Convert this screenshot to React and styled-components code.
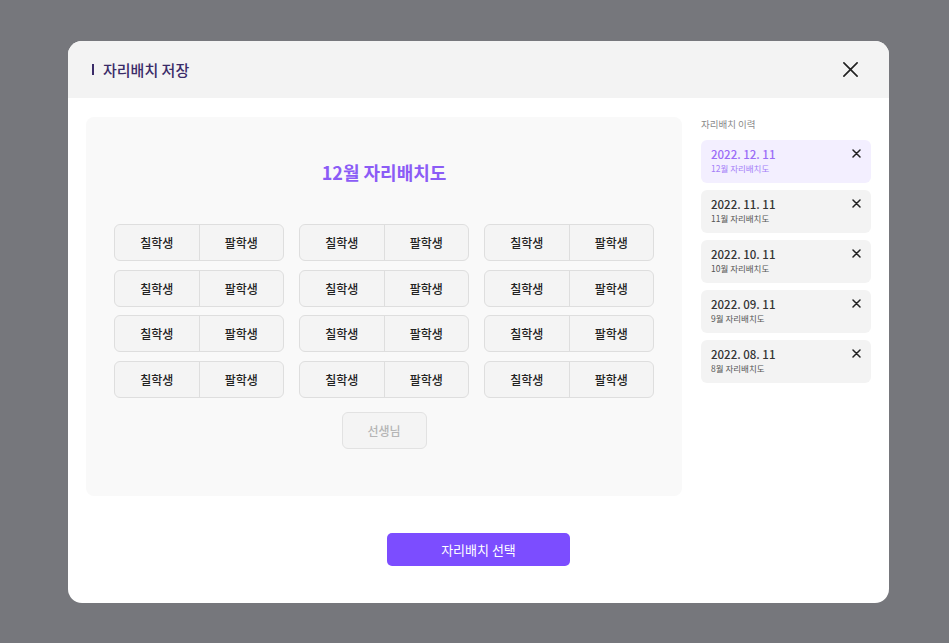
import React from "react";
import styled, { createGlobalStyle } from "styled-components";

const GlobalStyle = createGlobalStyle`
  html, body {
    margin: 0;
    padding: 0;
    background: #76777c;
    font-family: "Noto Sans CJK KR", "Noto Sans", sans-serif;
  }
`;

const Overlay = styled.div`
  width: 949px;
  height: 643px;
  box-sizing: border-box;
  padding: 41px 0 0 68px;
  display: flex;
  align-items: flex-start;
`;

const Modal = styled.div`
  width: 821px;
  height: 562px;
  background: #ffffff;
  border-radius: 14px;
  overflow: hidden;
  display: flex;
  flex-direction: column;
`;

const Header = styled.div`
  height: 57px;
  background: #f3f3f3;
  display: flex;
  align-items: center;
  justify-content: space-between;
  padding: 0 29px 0 24px;
  flex-shrink: 0;
`;

const HeaderTitle = styled.h2`
  margin: 0;
  font-size: 15px;
  font-weight: 500;
  color: #3a2b68;
  display: flex;
  align-items: center;
  gap: 9px;
`;

const Bar = styled.span`
  width: 2px;
  height: 11px;
  background: #3a2b68;
`;

const CloseButton = styled.button`
  border: none;
  background: none;
  padding: 0;
  width: 20px;
  height: 20px;
  display: flex;
  align-items: center;
  justify-content: center;
  cursor: pointer;
`;

const Body = styled.div`
  display: flex;
  gap: 19px;
  padding: 19px 18px 0 18px;
`;

const Board = styled.div`
  width: 596px;
  height: 379px;
  background: #f9f9f9;
  border-radius: 8px;
  box-sizing: border-box;
  padding-top: 43px;
  display: flex;
  flex-direction: column;
  align-items: center;
`;

const BoardTitle = styled.h3`
  margin: 0;
  font-size: 18px;
  line-height: 24px;
  font-weight: 700;
  color: #8b5cf6;
`;

const SeatGrid = styled.div`
  margin-top: 40px;
  display: grid;
  grid-template-columns: repeat(3, 170px);
  grid-auto-rows: 37px;
  column-gap: 15px;
  row-gap: 8.5px;
`;

const Desk = styled.div`
  display: flex;
  box-sizing: border-box;
  border: 1px solid #dedede;
  border-radius: 6px;
  background: #f4f4f4;
  overflow: hidden;
`;

const Seat = styled.div`
  flex: 1;
  display: flex;
  align-items: center;
  justify-content: center;
  font-size: 12px;
  font-weight: 500;
  color: #222;
  & + & {
    border-left: 1px solid #dedede;
  }
`;

const Teacher = styled.div`
  margin-top: 14px;
  width: 85px;
  height: 37px;
  box-sizing: border-box;
  border: 1px solid #e2e2e2;
  border-radius: 6px;
  background: #f4f4f4;
  display: flex;
  align-items: center;
  justify-content: center;
  font-size: 12px;
  font-weight: 500;
  color: #b5b5b5;
`;

const History = styled.div`
  width: 170px;
  display: flex;
  flex-direction: column;
`;

const HistoryLabel = styled.div`
  font-size: 9.5px;
  line-height: 14px;
  color: #8a8a8a;
  margin-bottom: 9px;
`;

const HistoryList = styled.div`
  display: flex;
  flex-direction: column;
  gap: 7px;
`;

const HistoryCard = styled.div`
  position: relative;
  height: 43px;
  box-sizing: border-box;
  padding: 6px 10px 0 10px;
  border-radius: 6px;
  background: ${(p) => (p.$active ? "#f3efff" : "#f3f3f3")};
  color: ${(p) => (p.$active ? "#9b6cf7" : "#333")};
`;

const HistoryDate = styled.div`
  font-size: 11.5px;
  line-height: 16px;
  font-weight: 500;
`;

const HistorySub = styled.div`
  font-size: 8.5px;
  line-height: 13px;
  color: ${(p) => (p.$active ? "#a47ef8" : "#555")};
`;

const RemoveIcon = styled.span`
  position: absolute;
  top: 9px;
  right: 10px;
  display: flex;
`;

const Footer = styled.div`
  display: flex;
  justify-content: center;
  padding-top: 37px;
`;

const PrimaryButton = styled.button`
  width: 183px;
  height: 33px;
  border: none;
  border-radius: 5px;
  background: #7c4dff;
  color: #ffffff;
  font-family: inherit;
  font-size: 13px;
  font-weight: 400;
  cursor: pointer;
`;

const CloseIcon = ({ size = 18, stroke = 2, color = "#222" }) => (
  <svg width={size} height={size} viewBox="0 0 18 18" fill="none">
    <path
      d="M2 2L16 16M16 2L2 16"
      stroke={color}
      strokeWidth={stroke}
      strokeLinecap="round"
    />
  </svg>
);

const history = [
  { date: "2022. 12. 11", label: "12월 자리배치도", active: true },
  { date: "2022. 11. 11", label: "11월 자리배치도" },
  { date: "2022. 10. 11", label: "10월 자리배치도" },
  { date: "2022. 09. 11", label: "9월 자리배치도" },
  { date: "2022. 08. 11", label: "8월 자리배치도" },
];

const desks = Array.from({ length: 12 });

export default function App() {
  return (
    <>
      <GlobalStyle />
      <Overlay>
        <Modal>
          <Header>
            <HeaderTitle>
              <Bar />
              자리배치 저장
            </HeaderTitle>
            <CloseButton>
              <CloseIcon size={17} stroke={1.8} />
            </CloseButton>
          </Header>
          <Body>
            <Board>
              <BoardTitle>12월 자리배치도</BoardTitle>
              <SeatGrid>
                {desks.map((_, i) => (
                  <Desk key={i}>
                    <Seat>칠학생</Seat>
                    <Seat>팔학생</Seat>
                  </Desk>
                ))}
              </SeatGrid>
              <Teacher>선생님</Teacher>
            </Board>
            <History>
              <HistoryLabel>자리배치 이력</HistoryLabel>
              <HistoryList>
                {history.map((h) => (
                  <HistoryCard key={h.date} $active={h.active}>
                    <HistoryDate>{h.date}</HistoryDate>
                    <HistorySub $active={h.active}>{h.label}</HistorySub>
                    <RemoveIcon>
                      <CloseIcon size={9} stroke={3} color="#222" />
                    </RemoveIcon>
                  </HistoryCard>
                ))}
              </HistoryList>
            </History>
          </Body>
          <Footer>
            <PrimaryButton>자리배치 선택</PrimaryButton>
          </Footer>
        </Modal>
      </Overlay>
    </>
  );
}
